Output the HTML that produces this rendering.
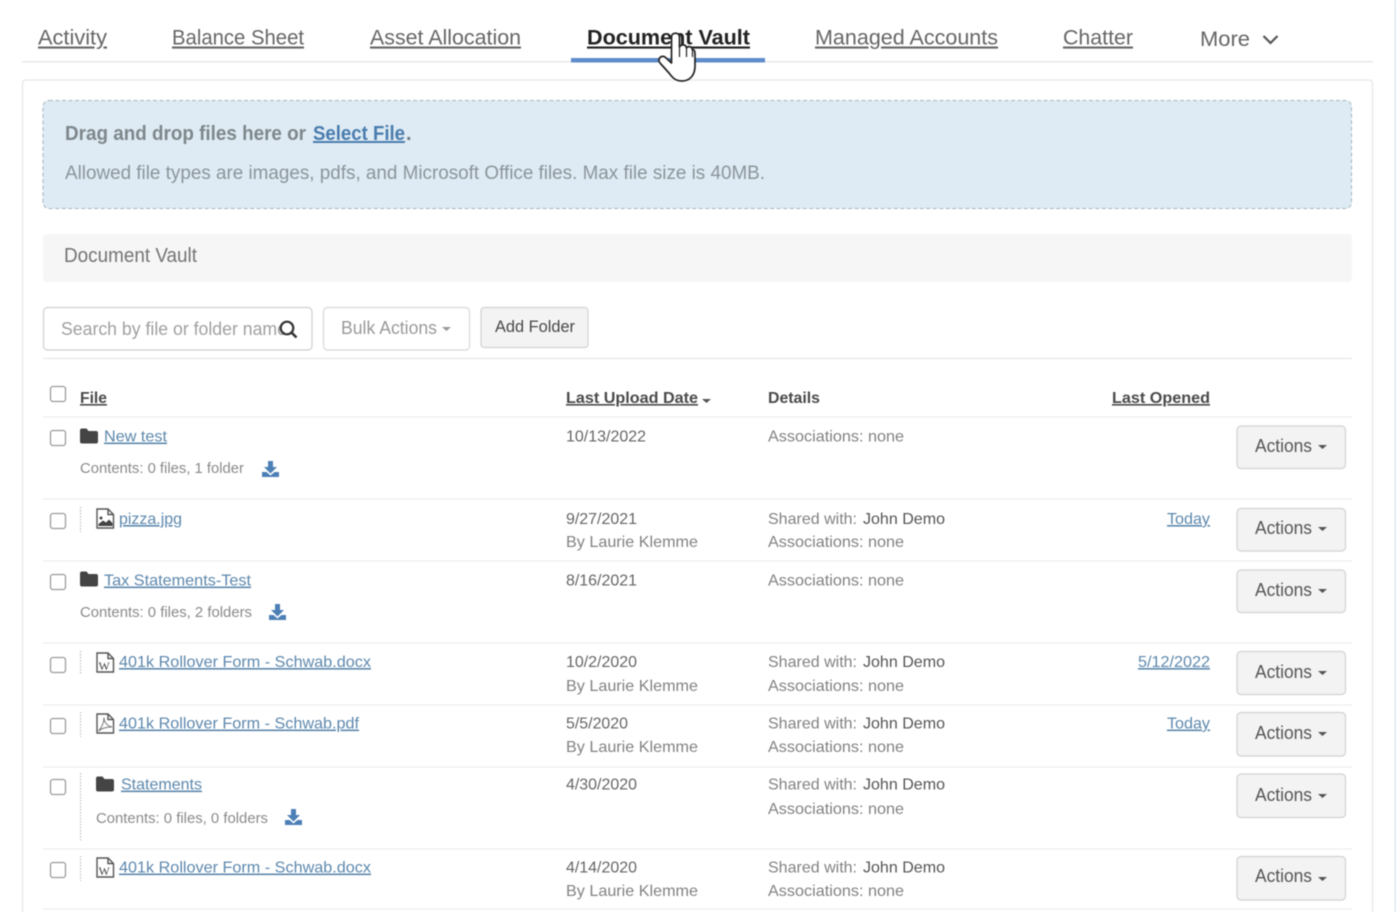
<!DOCTYPE html>
<html lang="en">
<head>
<meta charset="utf-8">
<title>Document Vault</title>
<style>
html,body{margin:0;padding:0;background:#fff;width:1396px;height:912px;overflow:hidden}
svg{display:block;position:absolute;left:0;top:0;filter:blur(.5px)}
text{font-family:"Liberation Sans",sans-serif;white-space:pre}
.tab{font-size:21px;fill:#666;text-decoration:underline}
.b{font-weight:bold}
.hd{font-size:16px;font-weight:bold;fill:#4a4a4a;text-decoration:underline}
.lnk{font-size:16px;fill:#5d88ad;text-decoration:underline}
.t{font-size:16px;fill:#666}
.g{font-size:16px;fill:#828282}
.d{font-size:16px;fill:#555}
.sm{font-size:14.5px;fill:#8a8a8a}
.btn{fill:#f3f3f3;stroke:#d2d2d2;stroke-width:1.2}
.act{font-size:18px;fill:#555}
.cb{fill:#fff;stroke:#9b9b9b;stroke-width:1.3}
.row{stroke:#ededed;stroke-width:1}
.dot{stroke:#b5b5b5;stroke-width:1;stroke-dasharray:1.5 1.5}
</style>
</head>
<body>
<svg width="1396" height="912" viewBox="0 0 1396 912" xmlns="http://www.w3.org/2000/svg">
<defs>
<g id="folder"><path d="M0 2.500Q0 .5 2 .5H6.500L8.500 3H16Q18 3 18 5V13.500Q18 15.500 16 15.500H2Q0 15.500 0 13.500Z" fill="#444"/></g>
<g id="dl" fill="#4c7fb5"><path d="M6 0H11V6H15L8.500 12.500L2 6H6Z"/><path d="M0 11H4.500L8.500 14.500L12.500 11H17V16H0Z"/></g>
<g id="doc" fill="none" stroke="#555" stroke-width="1.400"><path d="M1 1H12L17.500 6.500V20H1Z"/><path d="M12 1V6.500H17.500"/></g>
<g id="cr"><path d="M0 0H9L4.500 4Z" fill="#555"/></g>
</defs>
<rect width="1396" height="912" fill="#fff"/>
<rect x="1394.500" y="0" width="1.500" height="912" fill="#d9e8f1"/>

<!-- tabs -->
<text class="tab" x="38" y="44.500" textLength="69" lengthAdjust="spacingAndGlyphs">Activity</text>
<text class="tab" x="172" y="44.500" textLength="132" lengthAdjust="spacingAndGlyphs">Balance Sheet</text>
<text class="tab" x="370" y="44.500" textLength="151" lengthAdjust="spacingAndGlyphs">Asset Allocation</text>
<text class="tab b" style="fill:#222" x="587" y="44.500" textLength="163" lengthAdjust="spacingAndGlyphs">Document Vault</text>
<text class="tab" x="815" y="44.500" textLength="183" lengthAdjust="spacingAndGlyphs">Managed Accounts</text>
<text class="tab" x="1063" y="44.500" textLength="70" lengthAdjust="spacingAndGlyphs">Chatter</text>
<text class="tab" style="text-decoration:none" x="1200" y="46" textLength="50" lengthAdjust="spacingAndGlyphs">More</text>
<path d="M1263.500 36L1270.500 43L1277.500 36" fill="none" stroke="#555" stroke-width="2.200"/>
<rect x="22" y="61" width="1351" height="1.500" fill="#e9e9e9"/>
<rect x="571" y="58" width="194" height="4.500" fill="#5f8ccb"/>

<!-- card -->
<path d="M22.500 912V84Q22.500 80 26 80H1369Q1372.500 80 1372.500 84V912" fill="#fff" stroke="#e6e6e6" stroke-width="1.300"/>

<!-- dropzone -->
<rect x="43" y="100.500" width="1308.500" height="108" rx="6" fill="#deebf4" stroke="#a3b5c0" stroke-width="1" stroke-dasharray="4 2.500"/>
<text class="b" x="65" y="140" font-size="20" fill="#7e878b" textLength="241" lengthAdjust="spacingAndGlyphs">Drag and drop files here or</text>
<text class="b" x="313" y="140" font-size="20" fill="#4a7cae" text-decoration="underline" textLength="92" lengthAdjust="spacingAndGlyphs">Select File</text>
<text class="b" x="406" y="140" font-size="20" fill="#6f7a80">.</text>
<text x="65" y="179" font-size="19" fill="#8b959a" textLength="700" lengthAdjust="spacingAndGlyphs">Allowed file types are images, pdfs, and Microsoft Office files. Max file size is 40MB.</text>

<!-- title bar -->
<rect x="43" y="234" width="1309" height="48" rx="4" fill="#f6f6f6"/>
<text x="64" y="262" font-size="20" fill="#747474" textLength="133" lengthAdjust="spacingAndGlyphs">Document Vault</text>

<!-- toolbar -->
<rect x="43.500" y="307.500" width="268.500" height="42.500" rx="4" fill="#fff" stroke="#cfcfcf" stroke-width="1.200"/>
<text x="61" y="335" font-size="18" fill="#a0a0a0" textLength="226" lengthAdjust="spacingAndGlyphs">Search by file or folder name</text>
<circle cx="287" cy="328" r="6.300" fill="#fff" stroke="#333" stroke-width="2.200"/>
<path d="M291.500 332.500L296.500 337.500" stroke="#333" stroke-width="2.600"/>
<rect x="323.500" y="307.500" width="146" height="42.500" rx="4" fill="#fff" stroke="#d8d8d8" stroke-width="1.200"/>
<text x="341" y="334" font-size="18" fill="#9a9a9a" textLength="96" lengthAdjust="spacingAndGlyphs">Bulk Actions</text>
<path d="M442 327H451L446.500 331Z" fill="#999"/>
<rect class="btn" x="481" y="307.500" width="107" height="40" rx="3"/>
<text x="495" y="332" font-size="16.500" fill="#484848" textLength="80" lengthAdjust="spacingAndGlyphs">Add Folder</text>
<line x1="43" y1="358.500" x2="1352" y2="358.500" stroke="#e2e2e2"/>

<!-- header -->
<rect class="cb" x="50.500" y="386.500" width="15" height="15" rx="2.500"/>
<text class="hd" x="80" y="403" textLength="27" lengthAdjust="spacingAndGlyphs">File</text>
<text class="hd" x="566" y="403" textLength="132" lengthAdjust="spacingAndGlyphs">Last Upload Date</text>
<use href="#cr" x="702" y="399"/>
<text class="hd" style="text-decoration:none" x="768" y="403" textLength="52" lengthAdjust="spacingAndGlyphs">Details</text>
<text class="hd" x="1112" y="403" textLength="98" lengthAdjust="spacingAndGlyphs">Last Opened</text>
<line class="row" x1="43" y1="417" x2="1352" y2="417"/>

<!-- row 1 -->
<rect class="cb" x="50.500" y="430.500" width="15" height="15" rx="2.500"/>
<use href="#folder" x="80" y="428"/>
<text class="lnk" x="104" y="441.500" textLength="63" lengthAdjust="spacingAndGlyphs">New test</text>
<text class="sm" x="80" y="473" textLength="164" lengthAdjust="spacingAndGlyphs">Contents: 0 files, 1 folder</text>
<use href="#dl" x="262" y="461"/>
<text class="t" x="566" y="441.500" textLength="80" lengthAdjust="spacingAndGlyphs">10/13/2022</text>
<text class="g" x="768" y="441.500" textLength="136" lengthAdjust="spacingAndGlyphs">Associations: none</text>
<rect class="btn" x="1237" y="426" width="108.500" height="42.500" rx="4"/>
<text class="act" x="1255" y="452" textLength="57" lengthAdjust="spacingAndGlyphs">Actions</text>
<use href="#cr" x="1318" y="445"/>
<line class="row" x1="43" y1="499" x2="1352" y2="499"/>

<!-- row 2 -->
<rect class="cb" x="50.500" y="513.500" width="15" height="15" rx="2.500"/>
<line class="dot" x1="80.500" y1="507" x2="80.500" y2="532"/>
<use href="#doc" x="96" y="508"/>
<circle cx="101" cy="518" r="1.500" fill="#444"/>
<path d="M98.500 526V524L103 520.500L106 522.500L109 519.500L112.500 523V526Z" fill="#444"/>
<text class="lnk" x="119" y="524" textLength="63" lengthAdjust="spacingAndGlyphs">pizza.jpg</text>
<text class="t" x="566" y="524" textLength="71" lengthAdjust="spacingAndGlyphs">9/27/2021</text>
<text class="g" x="566" y="547" textLength="132" lengthAdjust="spacingAndGlyphs">By Laurie Klemme</text>
<text class="g" x="768" y="524" textLength="89" lengthAdjust="spacingAndGlyphs">Shared with:</text>
<text class="d" x="863" y="524" textLength="82" lengthAdjust="spacingAndGlyphs">John Demo</text>
<text class="g" x="768" y="547" textLength="136" lengthAdjust="spacingAndGlyphs">Associations: none</text>
<text class="lnk" x="1167" y="524" textLength="43" lengthAdjust="spacingAndGlyphs">Today</text>
<rect class="btn" x="1237" y="508.500" width="108.500" height="42.500" rx="4"/>
<text class="act" x="1255" y="534" textLength="57" lengthAdjust="spacingAndGlyphs">Actions</text>
<use href="#cr" x="1318" y="527"/>
<line class="row" x1="43" y1="561" x2="1352" y2="561"/>

<!-- row 3 -->
<rect class="cb" x="50.500" y="574.500" width="15" height="15" rx="2.500"/>
<use href="#folder" x="80" y="571"/>
<text class="lnk" x="104" y="585.500" textLength="147" lengthAdjust="spacingAndGlyphs">Tax Statements-Test</text>
<text class="sm" x="80" y="617" textLength="172" lengthAdjust="spacingAndGlyphs">Contents: 0 files, 2 folders</text>
<use href="#dl" x="269" y="604"/>
<text class="t" x="566" y="585.500" textLength="71" lengthAdjust="spacingAndGlyphs">8/16/2021</text>
<text class="g" x="768" y="585.500" textLength="136" lengthAdjust="spacingAndGlyphs">Associations: none</text>
<rect class="btn" x="1237" y="570" width="108.500" height="42.500" rx="4"/>
<text class="act" x="1255" y="596" textLength="57" lengthAdjust="spacingAndGlyphs">Actions</text>
<use href="#cr" x="1318" y="589"/>
<line class="row" x1="43" y1="643" x2="1352" y2="643"/>

<!-- row 4 -->
<rect class="cb" x="50.500" y="657.500" width="15" height="15" rx="2.500"/>
<line class="dot" x1="80.500" y1="651" x2="80.500" y2="675"/>
<use href="#doc" x="96" y="652"/>
<text x="98.500" y="670" font-size="12" fill="#444" style="font-family:'Liberation Serif',serif">W</text>
<text class="lnk" x="119" y="667" textLength="252" lengthAdjust="spacingAndGlyphs">401k Rollover Form - Schwab.docx</text>
<text class="t" x="566" y="667" textLength="71" lengthAdjust="spacingAndGlyphs">10/2/2020</text>
<text class="g" x="566" y="691" textLength="132" lengthAdjust="spacingAndGlyphs">By Laurie Klemme</text>
<text class="g" x="768" y="667" textLength="89" lengthAdjust="spacingAndGlyphs">Shared with:</text>
<text class="d" x="863" y="667" textLength="82" lengthAdjust="spacingAndGlyphs">John Demo</text>
<text class="g" x="768" y="691" textLength="136" lengthAdjust="spacingAndGlyphs">Associations: none</text>
<text class="lnk" x="1138" y="667" textLength="72" lengthAdjust="spacingAndGlyphs">5/12/2022</text>
<rect class="btn" x="1237" y="651.500" width="108.500" height="43" rx="4"/>
<text class="act" x="1255" y="678" textLength="57" lengthAdjust="spacingAndGlyphs">Actions</text>
<use href="#cr" x="1318" y="671"/>
<line class="row" x1="43" y1="705" x2="1352" y2="705"/>

<!-- row 5 -->
<rect class="cb" x="50.500" y="718.500" width="15" height="15" rx="2.500"/>
<line class="dot" x1="80.500" y1="712" x2="80.500" y2="737"/>
<use href="#doc" x="96" y="713"/>
<path d="M98.500 731C102 727 104 722 104 717.500C104 722 107 726 112 727C107 727 102 728 98.500 731Z" fill="none" stroke="#777" stroke-width="1"/>
<text class="lnk" x="119" y="728.500" textLength="240" lengthAdjust="spacingAndGlyphs">401k Rollover Form - Schwab.pdf</text>
<text class="t" x="566" y="728.500" textLength="62" lengthAdjust="spacingAndGlyphs">5/5/2020</text>
<text class="g" x="566" y="752" textLength="132" lengthAdjust="spacingAndGlyphs">By Laurie Klemme</text>
<text class="g" x="768" y="728.500" textLength="89" lengthAdjust="spacingAndGlyphs">Shared with:</text>
<text class="d" x="863" y="728.500" textLength="82" lengthAdjust="spacingAndGlyphs">John Demo</text>
<text class="g" x="768" y="752" textLength="136" lengthAdjust="spacingAndGlyphs">Associations: none</text>
<text class="lnk" x="1167" y="728.500" textLength="43" lengthAdjust="spacingAndGlyphs">Today</text>
<rect class="btn" x="1237" y="712.500" width="108.500" height="43.500" rx="4"/>
<text class="act" x="1255" y="739" textLength="57" lengthAdjust="spacingAndGlyphs">Actions</text>
<use href="#cr" x="1318" y="732"/>
<line class="row" x1="43" y1="767" x2="1352" y2="767"/>

<!-- row 6 -->
<rect class="cb" x="50.500" y="779.500" width="15" height="15" rx="2.500"/>
<line class="dot" x1="80.500" y1="773" x2="80.500" y2="841"/>
<use href="#folder" x="96" y="776"/>
<text class="lnk" x="121" y="789.500" textLength="81" lengthAdjust="spacingAndGlyphs">Statements</text>
<text class="sm" x="96" y="823" textLength="172" lengthAdjust="spacingAndGlyphs">Contents: 0 files, 0 folders</text>
<use href="#dl" x="285" y="809"/>
<text class="t" x="566" y="789.500" textLength="71" lengthAdjust="spacingAndGlyphs">4/30/2020</text>
<text class="g" x="768" y="789.500" textLength="89" lengthAdjust="spacingAndGlyphs">Shared with:</text>
<text class="d" x="863" y="789.500" textLength="82" lengthAdjust="spacingAndGlyphs">John Demo</text>
<text class="g" x="768" y="814" textLength="136" lengthAdjust="spacingAndGlyphs">Associations: none</text>
<rect class="btn" x="1237" y="774" width="108.500" height="43.500" rx="4"/>
<text class="act" x="1255" y="801" textLength="57" lengthAdjust="spacingAndGlyphs">Actions</text>
<use href="#cr" x="1318" y="794"/>
<line class="row" x1="43" y1="849" x2="1352" y2="849"/>

<!-- row 7 -->
<rect class="cb" x="50.500" y="862.500" width="15" height="15" rx="2.500"/>
<line class="dot" x1="80.500" y1="856" x2="80.500" y2="881"/>
<use href="#doc" x="96" y="857"/>
<text x="98.500" y="875" font-size="12" fill="#444" style="font-family:'Liberation Serif',serif">W</text>
<text class="lnk" x="119" y="872.500" textLength="252" lengthAdjust="spacingAndGlyphs">401k Rollover Form - Schwab.docx</text>
<text class="t" x="566" y="872.500" textLength="71" lengthAdjust="spacingAndGlyphs">4/14/2020</text>
<text class="g" x="566" y="896" textLength="132" lengthAdjust="spacingAndGlyphs">By Laurie Klemme</text>
<text class="g" x="768" y="872.500" textLength="89" lengthAdjust="spacingAndGlyphs">Shared with:</text>
<text class="d" x="863" y="872.500" textLength="82" lengthAdjust="spacingAndGlyphs">John Demo</text>
<text class="g" x="768" y="896" textLength="136" lengthAdjust="spacingAndGlyphs">Associations: none</text>
<rect class="btn" x="1237" y="856.500" width="108.500" height="43.500" rx="4"/>
<text class="act" x="1255" y="882" textLength="57" lengthAdjust="spacingAndGlyphs">Actions</text>
<use href="#cr" x="1318" y="877"/>
<line class="row" x1="43" y1="909" x2="1352" y2="909"/>

<!-- hand cursor -->
<path d="M671.500 37C671.500 32 679.500 32 679.500 37V47C681 44 686 44 686.500 48C688 46 692 46 692.500 50C694 49 695 51 695 54V66C695 75 690 81 682 81C675 81 672 77 669 73L660 63C657 59 661 55 665 57L671.500 63Z" fill="#fff" stroke="#222" stroke-width="1.700" stroke-linejoin="round"/>
<path d="M679.500 47V57M686.500 48V57M692.500 50V57" stroke="#222" stroke-width="1.200" fill="none"/>
</svg>
</body>
</html>
